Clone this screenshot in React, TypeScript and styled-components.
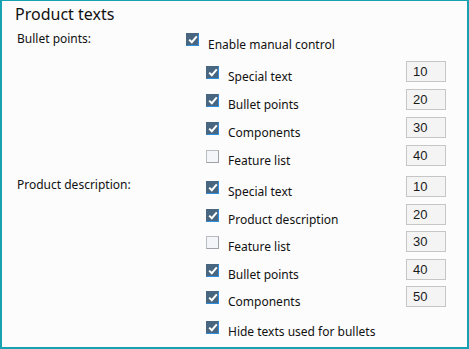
import React from 'react';
import styled, { createGlobalStyle } from 'styled-components';

const GlobalStyle = createGlobalStyle`
    html, body {
        margin: 0;
        padding: 0;
        background: #ffffff;
    }
    body {
        font-family: "Noto Sans", "Open Sans", sans-serif;
        color: #111111;
    }
`;

const Panel = styled.div`
    box-sizing: border-box;
    width: 469px;
    height: 349px;
    background-color: #fcfcfc;
    border: 2px solid #17a2b2;
    border-top-width: 1px;
    padding: 3px 21px 0 15px;
    display: flex;
    flex-direction: column;
`;

const Title = styled.div`
    font-size: 16px;
    line-height: 20px;
    margin-left: -2px;
    height: 29px;
    color: #111111;
`;

const Section = styled.div<{ $gap?: number }>`
    display: grid;
    grid-template-columns: 169px 1fr;
    margin-top: ${p => p.$gap ?? 0}px;
`;

const SectionLabel = styled.div<{ $offset: number }>`
    font-size: 12px;
    line-height: 16px;
    margin-top: ${p => p.$offset}px;
`;

const Rows = styled.div`
    display: flex;
    flex-direction: column;
`;

const Row = styled.div<{ $indent?: boolean; $height?: number; $top?: number }>`
    display: flex;
    align-items: flex-start;
    height: ${p => p.$height ?? 28}px;
    margin-top: ${p => p.$top ?? 0}px;
    padding-left: ${p => (p.$indent ? 20 : 0)}px;
`;

const Box = styled.span<{ $checked: boolean; $offset: number }>`
    box-sizing: border-box;
    flex: none;
    width: 13px;
    height: 13px;
    margin-top: ${p => p.$offset}px;
    display: flex;
    align-items: center;
    justify-content: center;
    background: ${p => (p.$checked ? '#48667f' : '#f3f5f8')};
    border: 1px solid ${p => (p.$checked ? '#48667f' : '#b9bcc0')};
    border-right-color: ${p => (p.$checked ? '#2f8de0' : '#9fa3a8')};
    border-bottom-color: ${p => (p.$checked ? '#2f8de0' : '#9fa3a8')};
`;

const Label = styled.span<{ $offset: number }>`
    font-size: 12px;
    line-height: 16px;
    margin-left: 9px;
    padding-top: ${p => p.$offset}px;
    flex: 1;
`;

const NumberBox = styled.div`
    box-sizing: border-box;
    width: 40px;
    height: 21px;
    background: #f4f4f4;
    border: 1px solid #c6c6c6;
    font-family: "Liberation Sans", Arial, sans-serif;
    font-size: 13px;
    line-height: 19px;
    padding-left: 6px;
    color: #1a1a1a;
`;

function Check(props: { checked: boolean; offset?: number }) {
    return (
        <Box $checked={props.checked} $offset={props.offset ?? 0}>
            {props.checked && (
                <svg width="10" height="9" viewBox="0 0 10 9">
                    <path d="M1.2 4.6 L3.8 7.2 L8.8 1.4" fill="none" stroke="#ffffff" strokeWidth="2" />
                </svg>
            )}
        </Box>
    );
}

type Item = { text: string; checked: boolean; value: string };

const bulletItems: Item[] = [
    { text: 'Special text', checked: true, value: '10' },
    { text: 'Bullet points', checked: true, value: '20' },
    { text: 'Components', checked: true, value: '30' },
    { text: 'Feature list', checked: false, value: '40' },
];

const descriptionItems: Item[] = [
    { text: 'Special text', checked: true, value: '10' },
    { text: 'Product description', checked: true, value: '20' },
    { text: 'Feature list', checked: false, value: '30' },
    { text: 'Bullet points', checked: true, value: '40' },
    { text: 'Components', checked: true, value: '50' },
];

function ItemRow(props: { item: Item; height?: number }) {
    return (
        <Row $indent $height={props.height}>
            <Check checked={props.item.checked} offset={5} />
            <Label $offset={8}>{props.item.text}</Label>
            <NumberBox>{props.item.value}</NumberBox>
        </Row>
    );
}

export default function App() {
    return (
        <>
            <GlobalStyle />
            <Panel>
                <Title>Product texts</Title>
                <Section>
                    <SectionLabel $offset={-2}>Bullet points:</SectionLabel>
                    <Rows>
                        <Row>
                            <Check checked />
                            <Label $offset={4}>Enable manual control</Label>
                        </Row>
                        {bulletItems.map(item => <ItemRow key={item.text} item={item} />)}
                    </Rows>
                </Section>
                <Section $gap={3}>
                    <SectionLabel $offset={1}>Product description:</SectionLabel>
                    <Rows>
                        {descriptionItems.map(item => <ItemRow key={item.text} item={item} height={27.5} />)}
                        <Row $indent $top={2.5}>
                            <Check checked offset={5} />
                            <Label $offset={8}>Hide texts used for bullets</Label>
                        </Row>
                    </Rows>
                </Section>
            </Panel>
        </>
    );
}
